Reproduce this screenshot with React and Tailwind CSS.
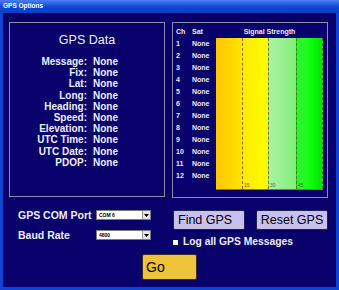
import React from "react";

const fields = [
  "Message",
  "Fix",
  "Lat",
  "Long",
  "Heading",
  "Speed",
  "Elevation",
  "UTC Time",
  "UTC Date",
  "PDOP",
];

const channels = Array.from({ length: 12 }, (_, i) => i + 1);

const FakeSelect = ({ value }) => (
  <div className="w-[55px] h-[10px] bg-white border border-[#7a7a7a] flex items-center">
    <span className="flex-1 pl-[2px] text-[5px] leading-none text-black">{value}</span>
    <div className="w-[8px] h-[8px] bg-[#e4e4e4] border-l border-[#9a9a9a] flex items-center justify-center">
      <svg width="5" height="3" viewBox="0 0 5 3">
        <path d="M0 0h5L2.5 3z" fill="#000" />
      </svg>
    </div>
  </div>
);

const App = () => {
  return (
    <div
      className="w-[339px] h-[290px] flex flex-col bg-[#0c44d8] text-[#eeeef6]"
      style={{ fontFamily: '"Liberation Sans", Arial, sans-serif' }}
    >
      {/* Title bar */}
      <div className="h-[13px] bg-gradient-to-b from-[#4a7ef0] via-[#0f4ad8] to-[#0a3cc4] flex items-center pl-[3px]">
        <span className="text-[6.5px] font-bold text-white leading-none">GPS Options</span>
      </div>

      {/* Client area */}
      <div className="flex-1 mx-[3px] mb-[3px] mt-0 bg-[#08006b] pl-[6px] pt-[9px]">
        <div className="flex gap-[7px]">
          {/* GPS data panel */}
          <div className="w-[156px] h-[175px] border border-[#8a8aa8] flex flex-col items-center pt-[10px]">
            <div className="text-[12.5px] leading-[15px]">GPS Data</div>
            <div className="mt-[8px] grid grid-cols-[77px_1fr] gap-x-[6px] w-full text-[10px] font-bold leading-[11.2px]">
              {fields.map((f) => (
                <React.Fragment key={f}>
                  <span className="text-right">{f}:</span>
                  <span>None</span>
                </React.Fragment>
              ))}
            </div>
          </div>

          {/* Satellite panel */}
          <div className="w-[156px] h-[176px] border border-[#8a8aa8] flex pt-[4px] text-[7px] font-bold">
            <div className="w-[43px] pl-[3px]">
              <div className="flex h-[11px] items-center">
                <span className="w-[16px]">Ch</span>
                <span>Sat</span>
              </div>
              {channels.map((c) => (
                <div key={c} className="flex h-[12px] items-center">
                  <span className="w-[16px]">{c}</span>
                  <span>None</span>
                </div>
              ))}
            </div>
            <div className="w-[107px]">
              <div className="h-[11px] flex items-center justify-center">Signal Strength</div>
              <div className="h-[152px] flex border-b border-[#5a8a50]">
                <div className="w-[26px] bg-gradient-to-r from-[#ffc800] via-[#ffd400] to-[#ffe400]" />
                <div className="w-[26px] relative border-l border-dashed border-[#7c7030] bg-gradient-to-r from-[#ffea00] to-[#ffff00]">
                  <span className="absolute bottom-[1px] left-[1px] text-[5px] font-normal text-[#6a6a30] leading-none">15</span>
                </div>
                <div className="w-[28px] relative border-l border-dashed border-[#7c7030] bg-gradient-to-r from-[#a8f4a0] via-[#98f090] to-[#80f078]">
                  <span className="absolute bottom-[1px] left-[1px] text-[5px] font-normal text-[#6a6a30] leading-none">30</span>
                </div>
                <div className="w-[27px] relative border-l border-r border-dashed border-[#4a7a30] bg-gradient-to-r from-[#30f030] via-[#10ff10] to-[#00e400]">
                  <span className="absolute bottom-[1px] left-[1px] text-[5px] font-normal text-[#4a6a30] leading-none">45</span>
                </div>
              </div>
            </div>
          </div>
        </div>

        {/* Bottom controls */}
        <div className="flex mt-[12px]">
          <div className="w-[164px] pl-[9px] flex flex-col gap-[10px] text-[10.5px] font-bold">
            <div className="flex items-center h-[10px]">
              <span className="w-[78px] leading-none mt-[1px]">GPS COM Port</span>
              <FakeSelect value="COM 6" />
            </div>
            <div className="flex items-center h-[10px]">
              <span className="w-[78px] leading-none mt-[1px]">Baud Rate</span>
              <FakeSelect value="4800" />
            </div>
          </div>
          <div className="flex flex-col">
            <div className="flex gap-[11px]">
              <button className="w-[72px] h-[20px] bg-[#c8c0ee] border border-[#202048] rounded-[2px] text-[12.5px] text-black text-left pl-[4px] leading-none">
                Find GPS
              </button>
              <button className="w-[72px] h-[20px] bg-[#c8c0ee] border border-[#202048] rounded-[2px] text-[12.5px] text-black leading-none">
                Reset GPS
              </button>
            </div>
            <div className="flex items-center mt-[6px] h-[12px] gap-[5px] text-[10.3px] font-bold">
              <span className="w-[5px] h-[5px] bg-white" />
              <span>Log all GPS Messages</span>
            </div>
          </div>
        </div>
        <div className="ml-[133px] mt-[6px]">
          <button className="w-[55px] h-[26px] bg-[#efc23c] border border-[#3a3020] rounded-[2px] text-[14px] text-black text-left pl-[3px]">
            Go
          </button>
        </div>
      </div>
    </div>
  );
};

export default App;
